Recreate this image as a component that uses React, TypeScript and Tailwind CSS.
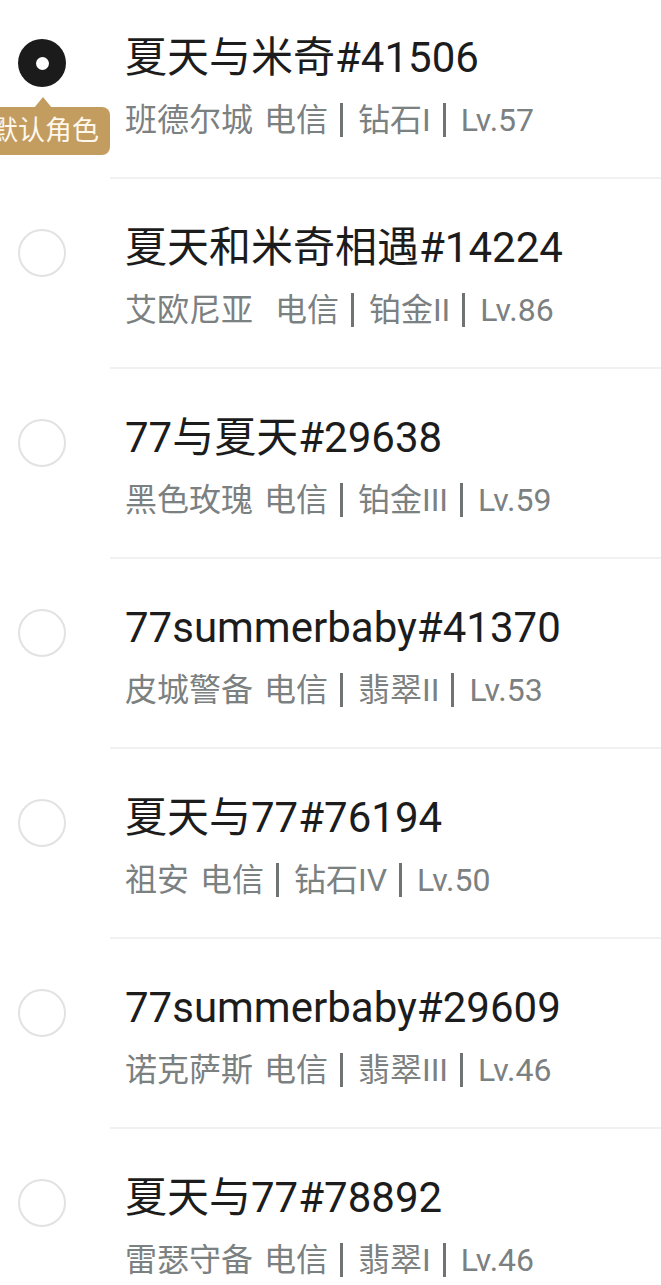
const roles = [
  { name: '夏天与米奇#41506', server: '班德尔城 电信', rank: '钻石I', lv: 'Lv.57' },
  { name: '夏天和米奇相遇#14224', server: '艾欧尼亚  电信', rank: '铂金II', lv: 'Lv.86' },
  { name: '77与夏天#29638', server: '黑色玫瑰 电信', rank: '铂金III', lv: 'Lv.59' },
  { name: '77summerbaby#41370', server: '皮城警备 电信', rank: '翡翠II', lv: 'Lv.53' },
  { name: '夏天与77#76194', server: '祖安 电信', rank: '钻石IV', lv: 'Lv.50' },
  { name: '77summerbaby#29609', server: '诺克萨斯 电信', rank: '翡翠III', lv: 'Lv.46' },
  { name: '夏天与77#78892', server: '雷瑟守备 电信', rank: '翡翠I', lv: 'Lv.46' },
]

function Bar() {
  return <span className="ml-[12px] mr-[15px] inline-block h-[34px] w-[3px] bg-[#6f7374]" />
}

export default function App() {
  return (
    <div
      className="h-[1285px] w-[661px] overflow-hidden bg-white"
      style={{ fontFamily: 'Roboto, "Noto Sans CJK SC", sans-serif' }}
    >
      <div className="-mt-[11px]">
        {roles.map((r, i) => (
          <div key={i} className="flex">
            <div className="relative w-[110px] shrink-0 pl-[18px] pt-[50px]">
              {i === 0 ? (
                <div className="flex h-[48px] w-[48px] items-center justify-center rounded-full bg-[#1b1b1b]">
                  <div className="h-[13px] w-[13px] rounded-full bg-white" />
                </div>
              ) : (
                <div className="h-[48px] w-[48px] rounded-full border-2 border-[#e2e2e2]" />
              )}
              {i === 0 && (
                <div className="absolute right-0 top-[118px] h-[48px] w-[130px]">
                  <div className="absolute left-[54px] top-[-10px] h-0 w-0 border-x-[9px] border-b-[11px] border-x-transparent border-b-[#c39c5f]" />
                  <div className="flex h-full items-center justify-end rounded-r-[8px] bg-[#c39c5f] pr-[11px] text-[27px] leading-none text-[#fdf7ec] whitespace-nowrap">
                    默认角色
                  </div>
                </div>
              )}
            </div>
            <div className="h-[190px] flex-1 border-b-2 border-[#f1f1f1] pl-[15px] pt-[43px]">
              <div className="h-[52px] text-[42px] leading-[52px] text-[#1c1c1c] whitespace-nowrap">{r.name}</div>
              <div className="mt-[16px] flex h-[40px] items-center text-[32px] leading-[40px] text-[#7b8081] whitespace-pre">
                <span className="[word-spacing:3px]">{r.server}</span>
                <Bar />
                <span>{r.rank}</span>
                <Bar />
                <span>{r.lv}</span>
              </div>
            </div>
          </div>
        ))}
      </div>
    </div>
  )
}
